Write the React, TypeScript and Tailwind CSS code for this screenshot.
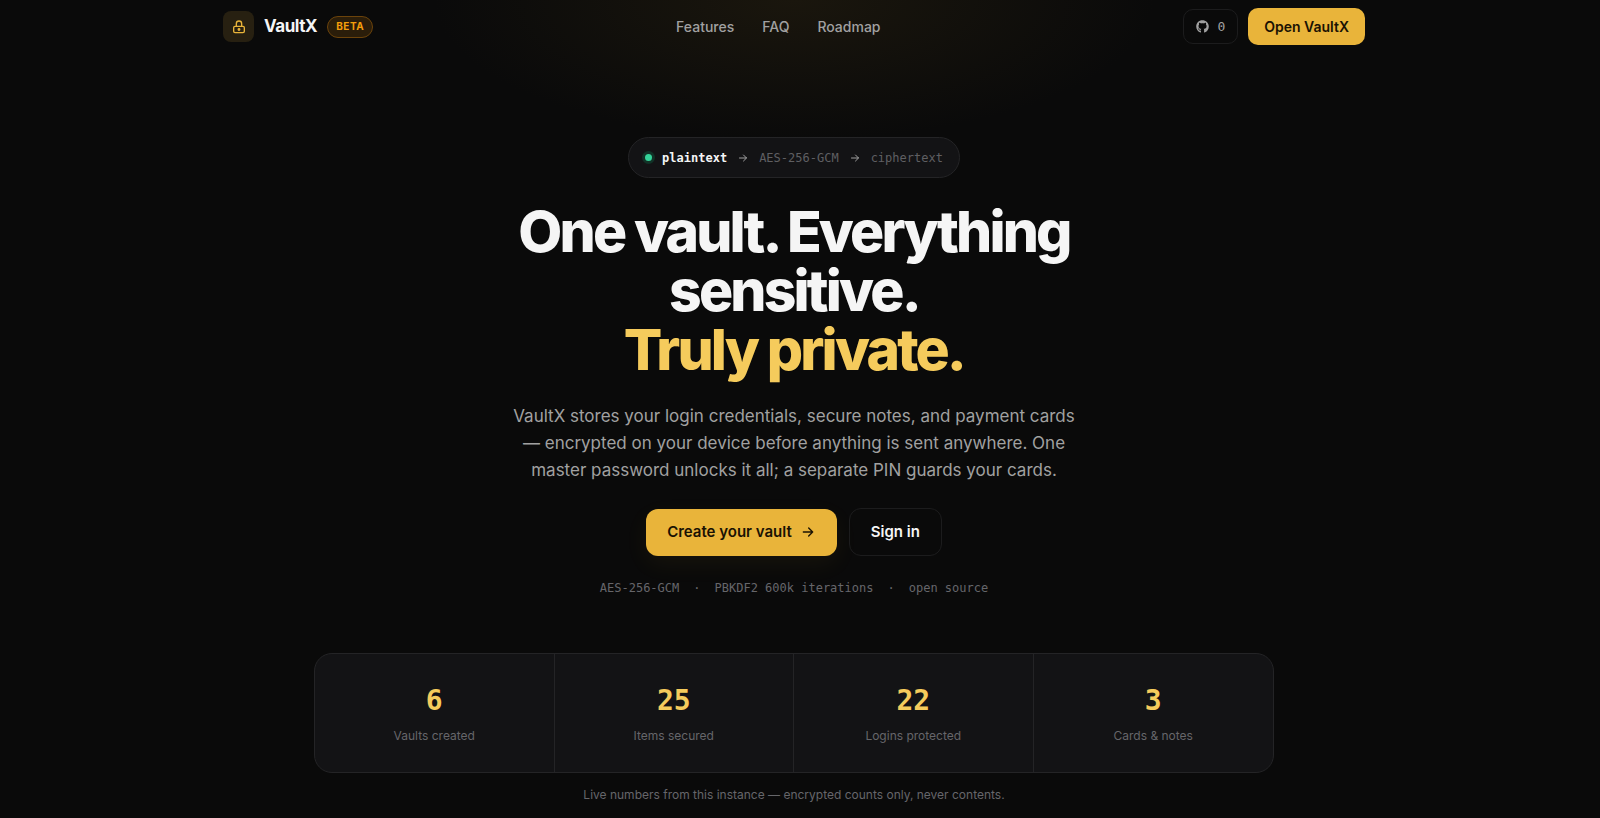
import { FaGithub } from "react-icons/fa";
import type { ReactNode } from "react";

const navLinks = [
  { label: "Features", href: "#features" },
  { label: "FAQ", href: "#faq" },
  { label: "Roadmap", href: "#roadmap" },
];

const stats = [
  { value: "6", label: "Vaults created" },
  { value: "25", label: "Items secured" },
  { value: "22", label: "Logins protected" },
  { value: "3", label: "Cards & notes" },
];

function Mono({ className = "", children }: { className?: string; children: ReactNode }) {
  return <span className={`font-['DejaVu_Sans_Mono',monospace] ${className}`}>{children}</span>;
}

function Arrow({ className }: { className: string }) {
  return (
    <svg
      viewBox="0 0 24 24"
      fill="none"
      stroke="currentColor"
      strokeWidth="2"
      strokeLinecap="round"
      strokeLinejoin="round"
      aria-hidden="true"
      className={className}
    >
      <path d="M5 12h14M13 6l6 6-6 6" />
    </svg>
  );
}

function Lock() {
  return (
    <svg
      viewBox="0 0 24 24"
      fill="none"
      stroke="currentColor"
      strokeWidth="2"
      strokeLinecap="round"
      strokeLinejoin="round"
      aria-hidden="true"
      className="size-4"
    >
      <rect x="4" y="11" width="16" height="9.5" rx="2" />
      <path d="M8 11V7a4 4 0 0 1 8 0v4" />
      <circle cx="12" cy="15.8" r="1.2" fill="currentColor" />
    </svg>
  );
}

function Header() {
  return (
    <header className="mx-auto flex w-full max-w-[1182px] items-center justify-between px-5 py-2">
      <div className="flex items-center gap-2.5">
        <span className="flex size-[31px] items-center justify-center rounded-lg bg-[#272011] text-[#e9b43a]">
          <Lock />
        </span>
        <span className="text-[17px] font-bold tracking-tight text-[#f5f5f5]">VaultX</span>
        <span className="flex h-[22px] items-center rounded-full border border-[#6b430b] bg-[#2a1d0a] px-2 text-[10px] font-bold tracking-wider text-[#f59e0b]">
          BETA
        </span>
      </div>
      <nav className="flex gap-7 text-sm font-medium text-[#a1a1a1]">
        {navLinks.map((link) => (
          <a key={link.label} href={link.href}>
            {link.label}
          </a>
        ))}
      </nav>
      <div className="flex items-center gap-2.5">
        <a
          href="#github"
          aria-label="GitHub stars"
          className="flex h-[35px] items-center gap-2 rounded-[10px] border border-[#1c1c1d] px-3 text-[#a1a1a1]"
        >
          <FaGithub className="size-[13px]" />
          <Mono className="text-[13px]">0</Mono>
        </a>
        <a
          href="#open"
          className="flex h-[37px] items-center rounded-[10px] bg-[#e9b43a] px-4 text-sm font-semibold text-[#1a1203]"
        >
          Open VaultX
        </a>
      </div>
    </header>
  );
}

function Hero() {
  return (
    <section className="flex flex-col items-center px-5 pt-[84px] text-center">
      <div className="flex h-[41px] items-center gap-2.5 rounded-full border border-[#242426] bg-[#131315] px-4 text-xs">
        <span className="flex items-center gap-2.5">
          <span className="size-[7px] rounded-full bg-[#34d399] ring-3 ring-[#123227]" />
          <Mono className="font-bold text-[#f5f5f5]">plaintext</Mono>
        </span>
        <Arrow className="size-3 text-[#a1a1a1]" />
        <Mono className="text-[#5f5f62]">AES-256-GCM</Mono>
        <Arrow className="size-3 text-[#a1a1a1]" />
        <Mono className="text-[#5f5f62]">ciphertext</Mono>
      </div>
      <h1 className="mt-6 max-w-[680px] text-[57px] leading-[59px] font-extrabold tracking-tighter text-[#f5f5f5]">
        One vault. Everything sensitive.
        <span className="block text-[#f5cb5c]">Truly private.</span>
      </h1>
      <p className="mt-6 max-w-[570px] text-[17px] leading-[27px] text-[#a1a1a1]">
        VaultX stores your login credentials, secure notes, and payment cards — encrypted on your device
        before anything is sent anywhere. One master password unlocks it all; a separate PIN guards your
        cards.
      </p>
      <div className="mt-6 flex items-center gap-3">
        <a
          href="#create"
          className="flex h-[47px] items-center gap-2 rounded-xl bg-[#e9b43a] px-[21px] text-[15px] font-semibold text-[#1a1203] shadow-[0_8px_24px_rgba(233,180,58,0.06)]"
        >
          Create your vault
          <Arrow className="size-4" />
        </a>
        <a
          href="#signin"
          className="flex h-[48px] items-center rounded-xl border border-[#1c1c1d] px-[21px] text-[15px] font-semibold text-[#f5f5f5]"
        >
          Sign in
        </a>
      </div>
      <div className="mt-6 flex items-center gap-3.5 text-xs text-[#66666a]">
        <Mono>AES-256-GCM</Mono>
        <Mono>·</Mono>
        <Mono>PBKDF2 600k iterations</Mono>
        <Mono>·</Mono>
        <Mono>open source</Mono>
      </div>
    </section>
  );
}

function Stats() {
  return (
    <section className="mx-auto mt-[57px] w-full max-w-[1000px] px-5 text-center text-[#66666a]">
      <dl className="grid grid-cols-4 divide-x divide-[#242426] overflow-hidden rounded-[18px] border border-[#242426] bg-[#131315]">
        {stats.map((stat) => (
          <div key={stat.label} className="flex flex-col-reverse gap-2 px-4 py-7">
            <dt className="text-xs leading-[17px]">{stat.label}</dt>
            <dd className="text-[28px] leading-9 font-bold text-[#f5cb5c]">
              <Mono>{stat.value}</Mono>
            </dd>
          </div>
        ))}
      </dl>
      <p className="mt-3.5 text-xs">Live numbers from this instance — encrypted counts only, never contents.</p>
    </section>
  );
}

export default function App() {
  return (
    <div className="min-h-screen bg-[#0a0a0a] bg-[radial-gradient(ellipse_360px_140px_at_calc(50%_-_6px)_0,#1a160d,#0a0a0a)] pr-3 font-['Inter',sans-serif] antialiased">
      <Header />
      <main>
        <Hero />
        <Stats />
      </main>
    </div>
  );
}
